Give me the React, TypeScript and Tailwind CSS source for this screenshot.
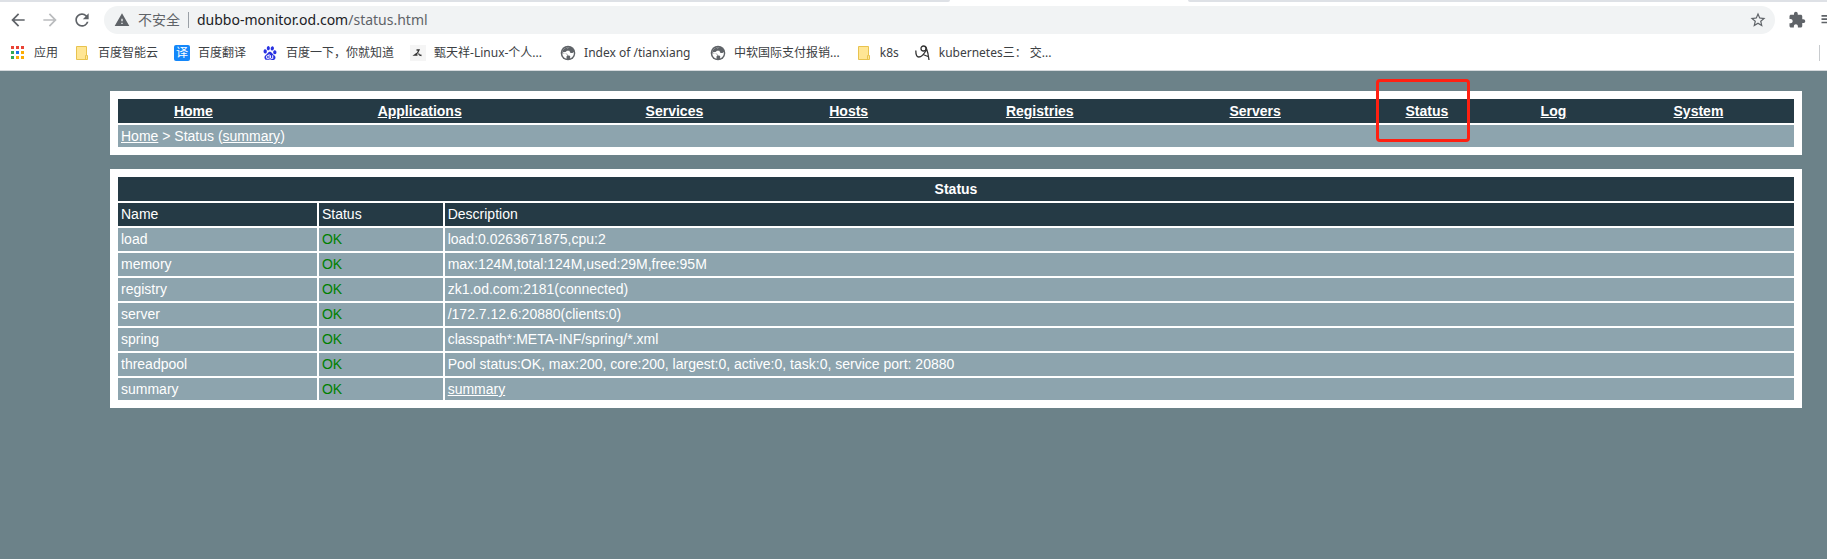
import type { ReactNode } from "react";
import {
  MdArrowBack,
  MdArrowForward,
  MdRefresh,
  MdWarning,
  MdStarBorder,
  MdPlaylistPlay,
} from "react-icons/md";
import { SiBaidu } from "react-icons/si";

const navItems = [
  { label: "Home", width: "w-[9%]" },
  { label: "Applications", width: "w-[18%]" },
  { label: "Services", width: "w-[12.4%]" },
  { label: "Hosts", width: "w-[8.4%]" },
  { label: "Registries", width: "w-[14.4%]" },
  { label: "Servers", width: "w-[11.3%]" },
  { label: "Status", width: "w-[9.2%]" },
  { label: "Log", width: "w-[5.9%]" },
  { label: "System", width: "w-[11.4%]" },
];

const rows = [
  { name: "load", description: "load:0.0263671875,cpu:2" },
  { name: "memory", description: "max:124M,total:124M,used:29M,free:95M" },
  { name: "registry", description: "zk1.od.com:2181(connected)" },
  { name: "server", description: "/172.7.12.6:20880(clients:0)" },
  { name: "spring", description: "classpath*:META-INF/spring/*.xml" },
  { name: "threadpool", description: "Pool status:OK, max:200, core:200, largest:0, active:0, task:0, service port: 20880" },
  { name: "summary", description: "summary", link: true },
];

const appColors = ["#ea4335", "#ea4335", "#ea4335", "#34a853", "#1a73e8", "#fbac04", "#34a853", "#fbac04", "#fbac04"];

function AppsIcon() {
  return (
    <svg viewBox="0 0 16 16" className="size-4">
      {appColors.map((fill, i) => (
        <rect key={i} x={1 + (i % 3) * 5} y={1 + Math.floor(i / 3) * 5} width="3" height="3" fill={fill} />
      ))}
    </svg>
  );
}

function FolderIcon() {
  return (
    <svg viewBox="0 0 16 16" className="size-4">
      <path d="M2.5 1.5h10v9h1v4h-11z" fill="#ffe694" stroke="#e8c34f" />
      <path d="M11.5 14v-3.500h1" fill="none" stroke="#e8c34f" />
    </svg>
  );
}

function TranslateIcon() {
  return (
    <span className="flex size-4 items-center justify-center rounded-xs bg-[#1487fa] text-xs leading-4 text-white">译</span>
  );
}

function PersonIcon() {
  return (
    <svg viewBox="0 0 16 16" className="size-4">
      <rect width="16" height="16" fill="#f5f5f5" />
      <path d="M6.500 5h2.500l-1.500 3M8 7.500L4.500 10h3M8.500 8.500l1 1.500 2 .5" fill="none" stroke="#333" strokeWidth="1.300" />
    </svg>
  );
}

function SketchIcon() {
  return (
    <svg viewBox="0 0 16 16" className="size-4" fill="none" stroke="#333" strokeWidth="1.300">
      <circle cx="8.500" cy="3.500" r="2.500" />
      <path d="M.8 5.500c0 4 1 6.500 3 6.500s5-2.500 7.500-7M11 2c1.500 4 2.500 8 3 13M8 9.500l5 2" />
    </svg>
  );
}

function GlobeIcon() {
  return (
    <svg viewBox="0 0 16 16" className="size-4">
      <circle cx="8" cy="8" r="7.300" fill="#5f6368" />
      <path d="M9.500 2.300L7 4v1.800h2.300L10.500 8h2l1.300-1c.4 3-1 5.500-3.800 6.500l.3-2-1-1H7.800L7 8.800H4.200L2.400 7.300C2.500 4.500 5.500 1.800 9.500 2.300z" fill="#fff" />
      <path d="M2.400 7.300C2.500 4.500 5.500 1.800 9.500 2.300L7 4v1.800L5.500 7z" fill="#5f6368" />
      <path d="M2.300 8.300l3.700.5 1.500 1.400-1 1.300v2.200C4 13 2.300 11 2.300 8.300z" fill="#fff" />
    </svg>
  );
}

function PuzzleIcon() {
  return (
    <svg viewBox="0 0 24 24" fill="currentColor" className="mx-px size-[18px]">
      <path d="M20.5 11H19V7c0-1.100-.9-2-2-2h-4V3.500C13 2.120 11.880 1 10.500 1S8 2.120 8 3.500V5H4c-1.100 0-1.990.9-1.990 2v3.800H3.500c1.490 0 2.700 1.210 2.700 2.700s-1.210 2.700-2.700 2.700H2V20c0 1.100.9 2 2 2h3.800v-1.500c0-1.490 1.210-2.700 2.700-2.700s2.700 1.210 2.700 2.700V22H17c1.100 0 2-.9 2-2v-4h1.500c1.380 0 2.500-1.120 2.500-2.500S21.880 11 20.500 11z" />
    </svg>
  );
}

const bookmarks: { label: string; icon: ReactNode; width?: string }[] = [
  { label: "应用", icon: <AppsIcon /> },
  { label: "百度智能云", icon: <FolderIcon /> },
  { label: "百度翻译", icon: <TranslateIcon /> },
  { label: "百度一下，你就知道", icon: <SiBaidu className="size-4 p-px text-[#2932e1]" /> },
  { label: "甄天祥-Linux-个人...", icon: <PersonIcon />, width: "min-w-[110px]" },
  { label: "Index of /tianxiang", icon: <GlobeIcon />, width: "min-w-[110px]" },
  { label: "中软国际支付报销...", icon: <GlobeIcon /> },
  { label: "k8s", icon: <FolderIcon /> },
  { label: "kubernetes三： 交...", icon: <SketchIcon /> },
];

function Browser() {
  return (
    <header className="overflow-hidden border-b border-[#d5d9dc] bg-white font-['Noto_Sans','Noto_Sans_CJK_SC',sans-serif] text-[#3c4043]">
      <div className="flex h-0.5 bg-white">
        <div className="w-[52%] rounded-br-sm bg-[#dee1e6]" />
        <div className="w-[13%]" />
        <div className="flex-1 rounded-bl-sm bg-[#dee1e6]" />
      </div>
      <div className="flex h-9 items-center pl-2">
        <div className="flex gap-3 text-[#5f6368]">
          <button aria-label="Back"><MdArrowBack className="size-5" /></button>
          <button aria-label="Forward" disabled className="text-[#babcbe]"><MdArrowForward className="size-5" /></button>
          <button aria-label="Reload"><MdRefresh className="size-5" /></button>
        </div>
        <div className="ml-3 flex h-7 flex-1 items-center rounded-full bg-[#f1f3f4] pr-2 pl-2.5 text-sm text-[#5f6368]">
          <MdWarning className="size-4" />
          <span className="ml-2">不安全</span>
          <span className="mr-2 ml-2 h-4 w-px bg-[#9aa0a6]" />
          <span className="flex-1"><span className="text-[#202124]">dubbo-monitor.od.com</span>/status.html</span>
          <button aria-label="Bookmark this page"><MdStarBorder className="size-[18px]" /></button>
        </div>
        <div className="-mr-3 ml-3 flex items-center gap-3 text-[#5f6368]">
          <button aria-label="Extensions"><PuzzleIcon /></button>
          <button aria-label="Media"><MdPlaylistPlay className="size-5" /></button>
        </div>
      </div>
      <div className="flex h-8 items-center pb-0.5 pl-2.5 text-xs">
        <nav className="flex flex-1 gap-4">
          {bookmarks.map((b) => (
            <a key={b.label} href="#" className="flex items-center gap-2 whitespace-nowrap">
              {b.icon}
              <span className={b.width}>{b.label}</span>
            </a>
          ))}
        </nav>
        <span className="mr-[7px] h-4 w-px bg-[#c8cbce]" />
      </div>
    </header>
  );
}

export default function App() {
  return (
    <div className="min-h-screen bg-[#6c8289]">
      <Browser />
      <main className="flex flex-col gap-3.5 pt-5 pr-[25px] pl-[110px] font-['Liberation_Sans',Arial,sans-serif] text-sm leading-4 text-white">
        <div className="bg-white px-2 py-1.5">
          <table className="w-full table-fixed border-separate border-spacing-x-0 border-spacing-y-0.5">
            <colgroup>
              {navItems.map((item) => (
                <col key={item.label} className={item.width} />
              ))}
            </colgroup>
            <thead>
              <tr className="bg-[#253a45]">
                {navItems.map(({ label }) => (
                  <th key={label} className="h-6 px-[3px]">
                    {label === "Status" ? (
                      <span className="relative">
                        <a href="#" className="underline">{label}</a>
                        <span className="pointer-events-none absolute -top-6 -left-[30px] h-[63px] w-[94px] rounded-sm border-3 border-[#ff2012]" />
                      </span>
                    ) : (
                      <a href="#" className="underline">{label}</a>
                    )}
                  </th>
                ))}
              </tr>
            </thead>
            <tbody>
              <tr className="bg-[#8da4ae]">
                <td colSpan={9} className="px-[3px] py-[3px]">
                  <a href="#" className="underline">Home</a> &gt; Status (<a href="#" className="underline">summary</a>)
                </td>
              </tr>
            </tbody>
          </table>
        </div>
        <div className="bg-white p-1.5">
          <table className="w-full table-fixed border-separate border-spacing-0.5">
            <colgroup>
              <col className="w-[11.9%]" />
              <col className="w-[7.4%]" />
              <col />
            </colgroup>
            <thead className="text-left">
              <tr>
                <th colSpan={3} className="h-6 bg-[#253a45] px-[3px] text-center">Status</th>
              </tr>
              <tr className="*:h-[23px] *:bg-[#253a45] *:px-[3px] *:pt-[3px] *:align-top *:font-normal">
                <th>Name</th>
                <th>Status</th>
                <th>Description</th>
              </tr>
            </thead>
            <tbody>
              {rows.map((r) => (
                <tr key={r.name} className="*:h-[23px] *:bg-[#8da4ae] *:px-[3px] *:pt-[3px] *:align-top last:*:h-[22px]">
                  <td>{r.name}</td>
                  <td className="text-[#008000]">OK</td>
                  <td>{r.link ? <a href="#" className="underline">{r.description}</a> : r.description}</td>
                </tr>
              ))}
            </tbody>
          </table>
        </div>
      </main>
    </div>
  );
}
